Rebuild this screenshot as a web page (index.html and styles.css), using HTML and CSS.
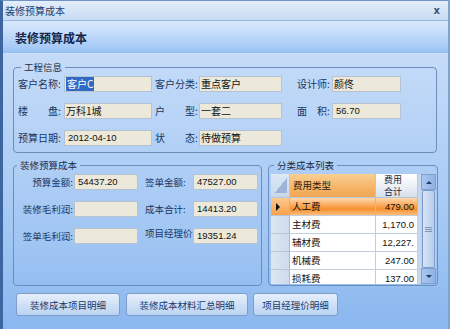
FILE: index.html
```html
<!DOCTYPE html>
<html lang="zh">
<head>
<meta charset="utf-8">
<title>装修预算成本</title>
<link rel="stylesheet" href="styles.css">
</head>
<body>
<div class="window">
  <div class="titlebar">
    <span class="title">装修预算成本</span>
    <span class="close">x</span>
  </div>
  <div class="banner"><h1>装修预算成本</h1></div>
  <div class="content">
    <fieldset class="group info">
      <legend>工程信息</legend>
      <div class="info-grid">
        <span class="lbl">客户名称:</span><div class="field"><span class="sel">客户C</span></div>
        <span class="lbl c2">客户分类:</span><div class="field">重点客户</div>
        <span class="lbl c3">设计师:</span><div class="field">颜佟</div>

        <span class="lbl">楼　　盘:</span><div class="field">万科1城</div>
        <span class="lbl c2">户　　型:</span><div class="field">一套二</div>
        <span class="lbl c3">面　积:</span><div class="field num">56.70</div>

        <span class="lbl">预算日期:</span><div class="field num">2012-04-10</div>
        <span class="lbl c2">状　　态:</span><div class="field">待做预算</div>
      </div>
    </fieldset>

    <div class="lower">
      <fieldset class="group cost">
        <legend>装修预算成本</legend>
        <div class="cost-grid">
          <span class="lbl r">预算金额:</span><div class="field num">54437.20</div>
          <span class="lbl c2b">签单金额:</span><div class="field num">47527.00</div>

          <span class="lbl r">装修毛利润:</span><div class="field"></div>
          <span class="lbl c2b">成本合计:</span><div class="field num">14413.20</div>

          <span class="lbl r">签单毛利润:</span><div class="field"></div>
          <span class="lbl c2b up">项目经理价</span><div class="field num">19351.24</div>
        </div>
      </fieldset>

      <fieldset class="group list">
        <legend>分类成本列表</legend>
        <div class="datagrid">
          <div class="table">
            <div class="hcell corner"></div>
            <div class="hcell sorted">费用类型</div>
            <div class="hcell two">费用<br>合计</div>

            <div class="rh selrh"><span class="arrow"></span></div>
            <div class="cell selrow">人工费</div>
            <div class="cell selrow amt">479.00</div>

            <div class="rh"></div><div class="cell">主材费</div><div class="cell amt">1,170.0</div>
            <div class="rh"></div><div class="cell">辅材费</div><div class="cell amt">12,227.</div>
            <div class="rh"></div><div class="cell">机械费</div><div class="cell amt">247.00</div>
            <div class="rh"></div><div class="cell">损耗费</div><div class="cell amt">137.00</div>
          </div>
          <div class="scrollbar">
            <div class="sbtn"><span class="tri up-tri"></span></div>
            <div class="thumb"><span class="grip"></span></div>
            <div class="sbtn"><span class="tri down-tri"></span></div>
          </div>
        </div>
      </fieldset>
    </div>

    <div class="buttons">
      <button class="btn b1">装修成本项目明细</button>
      <button class="btn b2">装修成本材料汇总明细</button>
      <button class="btn b3">项目经理价明细</button>
    </div>
  </div>
</div>
</body>
</html>
```

FILE: styles.css
```css
* { box-sizing: border-box; }
html, body { margin: 0; padding: 0; }
body {
  width: 450px;
  height: 329px;
  overflow: hidden;
  font-family: "Noto Sans CJK SC", "Noto Sans", sans-serif;
  color: #1a3560;
}
.window {
  width: 450px;
  height: 329px;
  border-left: 3px solid #3d66a0;
  border-right: 2px solid #7fa3d4;
  border-top: 1px solid #6f93c6;
  display: flex;
  flex-direction: column;
  background: linear-gradient(#cfe2fa 0%, #bcd6f7 30%, #9fc5f3 75%, #8ab7ef 100%);
}
.titlebar {
  height: 20px;
  flex: none;
  display: flex;
  align-items: center;
  justify-content: space-between;
  padding: 0 8px 0 2px;
  background: linear-gradient(#e4eefb, #c8dbf4);
  border-bottom: 1px solid #9ab8e0;
}
.title {
  font-size: 10px;
  line-height: 12px;
  color: #23406d;
}
.close {
  font-family: "DejaVu Sans", sans-serif;
  font-weight: bold;
  font-size: 10px;
  line-height: 10px;
  color: #3f5570;
}
.banner {
  height: 33px;
  flex: none;
  display: flex;
  align-items: center;
  padding-left: 12px;
  background: linear-gradient(#d8e8fc 0%, #c0dafa 45%, #a4c9f5 85%, #95bff2 100%);
  border-bottom: 1px solid #cfe0f6;
}
.banner h1 {
  margin: 0;
  font-size: 12px;
  line-height: 14px;
  font-weight: bold;
  color: #14284c;
  padding-top: 1px;
}
.content {
  flex: 1;
  padding: 6px 10px 0 10px;
  display: flex;
  flex-direction: column;
}
.group {
  margin: 0;
  border: 1px solid #6d8ebd;
  border-radius: 4px;
  min-width: 0;
}
.group legend {
  font-size: 9.5px;
  line-height: 14px;
  padding: 0 3px;
  margin-left: 3px;
  color: #1d2c45;
}
.info {
  width: 424px;
  padding: 2px 0 6px 4px;
}
.lbl {
  font-size: 10px;
  line-height: 16px;
  white-space: nowrap;
  color: #1a3560;
}
.field {
  height: 16px;
  background: #ece9da;
  border: 1px solid #b6c2d2;
  font-size: 10px;
  line-height: 14px;
  padding-left: 1px;
  color: #111;
  white-space: nowrap;
  overflow: hidden;
}
.field.num {
  font-family: "Liberation Sans", sans-serif;
  font-size: 9.5px;
  padding-left: 3px;
}
.sel {
  background: #316ac5;
  color: #fff;
  padding: 0 1px;
}
.info-grid {
  display: grid;
  grid-template-columns: 46px 88px 47px 83px 50px 69px;
  grid-template-rows: 16px 16px 16px;
  row-gap: 11px;
}
.info-grid .c2 { padding-left: 3px; }
.info-grid .c3 { padding-left: 15px; }

.lower {
  display: flex;
  gap: 6px;
  height: 128px;
  margin-top: 5px;
}
.cost {
  width: 249px;
  padding: 2px 0 0 0;
}
.cost-grid {
  display: grid;
  grid-template-columns: 60px 64px 55px 65px;
  grid-template-rows: 16px 16px 16px;
  row-gap: 11px;
}
.cost-grid .lbl { font-size: 9.5px; }
.cost-grid .r { text-align: right; padding-right: 1px; }
.cost-grid .c2b { padding-left: 7px; }
.cost-grid .up { line-height: 10px; }

.list {
  width: 170px;
  padding: 2px 1px 0 2px;
}
.datagrid {
  display: flex;
  height: 110px;
  background: #c6d7ee;
}
.table {
  width: 150px;
  display: grid;
  grid-template-columns: 19px 86px 42px;
  grid-template-rows: 24px repeat(5, 18px);
  overflow: hidden;
  height: 110px;
  align-content: start;
}
.hcell {
  font-size: 9.5px;
  line-height: 11px;
  display: flex;
  align-items: center;
  padding-left: 3px;
  border-right: 1px solid #b9c6d8;
  border-bottom: 1px solid #b9c6d8;
  color: #1c2a40;
  background: linear-gradient(#ffffff, #e9eef5 60%, #d6dfeb);
}
.hcell.corner {
  padding: 0;
  background:
    linear-gradient(to bottom right, transparent 52%, #9db4d6 53%) no-repeat 3px 3px / 13px 16px,
    linear-gradient(#dde8f5, #c8d8ec);
}
.hcell.sorted {
  background: linear-gradient(#f9cf92, #f6b467 60%, #f1a653);
  color: #2b2110;
}
.hcell.two {
  padding-left: 8px;
  font-size: 9px;
  line-height: 11.5px;
}
.rh {
  background: linear-gradient(to right, #dde7f3, #cddbed);
  border-right: 1px solid #a9bad2;
  border-bottom: 1px solid #b9c6d8;
  display: flex;
  align-items: center;
  padding-left: 5px;
}
.rh.selrh {
  background: linear-gradient(#fbc98f, #f8a24a);
}
.arrow {
  width: 0;
  height: 0;
  border-top: 4px solid transparent;
  border-bottom: 4px solid transparent;
  border-left: 4px solid #111;
}
.cell {
  font-size: 9.5px;
  line-height: 17px;
  padding-left: 2px;
  background: #fff;
  border-right: 1px solid #c4cedb;
  border-bottom: 1px solid #c4cedb;
  color: #111;
  white-space: nowrap;
  overflow: hidden;
}
.cell.amt {
  text-align: right;
  padding-right: 3px;
  font-family: "Liberation Sans", sans-serif;
  font-size: 9.5px;
}
.cell.selrow {
  background: linear-gradient(#fdd9ad 0%, #fab26a 35%, #f7902f 65%, #fbbd7c 100%);
  border-right-color: #f3b06a;
}
.scrollbar {
  width: 15px;
  margin-left: auto;
  display: flex;
  flex-direction: column;
  background: #b9cfee;
}
.sbtn {
  height: 16px;
  display: flex;
  align-items: center;
  justify-content: center;
  background: linear-gradient(to right, #a9c6ee, #8fb3e4);
  border: 1px solid #7e9fcf;
}
.tri {
  width: 0; height: 0;
  border-left: 3px solid transparent;
  border-right: 3px solid transparent;
}
.up-tri { border-bottom: 3px solid #1f3b66; }
.down-tri { border-top: 3px solid #1f3b66; }
.thumb {
  flex: 1;
  margin: 0 1px;
  background: linear-gradient(to right, #d7e4f6, #b8cdeb);
  border: 1px solid #7d9ccb;
  border-radius: 2px;
  display: flex;
  align-items: center;
  justify-content: center;
}
.grip {
  width: 7px;
  height: 5px;
  border-top: 1px solid #7f95b5;
  border-bottom: 1px solid #7f95b5;
  background: linear-gradient(#7f95b5, #7f95b5) no-repeat 0 1px / 7px 1px;
}
.buttons {
  display: flex;
  gap: 6px;
  margin-top: 7px;
  padding-left: 3px;
}
.btn {
  height: 23px;
  margin: 0;
  padding: 0;
  font-family: "Noto Sans CJK SC", sans-serif;
  font-size: 9.5px;
  color: #1b3a6b;
  border: 1px solid #7f9dc9;
  border-radius: 3px;
  background: linear-gradient(#e6effb, #d0e1f7 50%, #bcd3f2);
}
.b1 { width: 104px; }
.b2 { width: 122px; }
.b3 { width: 85px; margin-left: -1px; }
```
